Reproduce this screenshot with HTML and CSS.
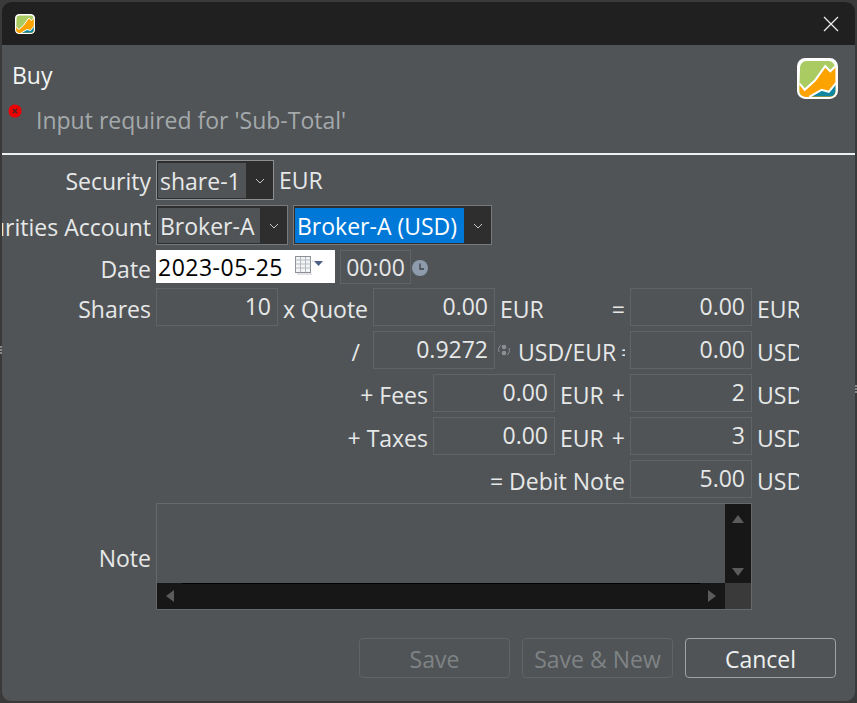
FILE: index.html
```html
<!DOCTYPE html>
<html lang="en">
<head>
<meta charset="utf-8">
<title>Buy</title>
<link rel="stylesheet" href="styles.css">
</head>
<body>
<svg class="defs" width="0" height="0" aria-hidden="true">
  <symbol id="logo" viewBox="0 0 40 40">
    <rect x="1" y="1" width="38" height="38" rx="7" fill="#fff"/>
    <path d="M3 9a6 6 0 0 1 6-6h22a6 6 0 0 1 6 6v16L2 37z" fill="#a9cb62"/>
    <path d="M2.500 25l5 6 10-9 10-14 5 5 5-5v30H8a5.500 5.500 0 0 1-5.500-5.500z" fill="#fda300"/>
    <path d="M12 37.500l12-6.500 7 2 6.500-8v7.500a5 5 0 0 1-5 5z" fill="#0f87a0"/>
    <path d="M2.500 25l5 6 10-9 10-14 5 5 6-6M12 38l12-7 7 2 7-8.500" fill="none" stroke="#fff" stroke-width="2"/>
    <rect x="1" y="1" width="38" height="38" rx="7" fill="none" stroke="#fff" stroke-width="2"/>
  </symbol>
</svg>
<span class="sash sash-left"></span>
<span class="sash sash-right"></span>
<div class="window">
  <header class="titlebar">
    <svg class="app-icon"><use href="#logo"/></svg>
    <svg class="close" viewBox="0 0 16 16"><path d="M1 1l14 14M15 1L1 15" stroke="#f0f0f0" stroke-width="1.200" fill="none"/></svg>
  </header>

  <section class="banner">
    <div class="banner-text">
      <h1 class="title">Buy</h1>
      <div class="message">
        <svg class="error" viewBox="0 0 16 16"><circle cx="8" cy="8" r="7.500" fill="#f00000"/><path d="M5.500 5.500l5 5M10.500 5.500l-5 5" stroke="#5a2020" stroke-width="1.800"/></svg>
        <span>Input required for 'Sub-Total'</span>
      </div>
    </div>
    <svg class="banner-logo"><use href="#logo"/></svg>
  </section>
  <hr class="rule">

  <main class="form">
    <div class="row row-security">
      <label class="lbl lbl-top w-main">Security</label>
      <div class="combo w-security">
        <span class="combo-text">share-1</span>
        <span class="combo-btn"><svg class="chev" viewBox="0 0 10 6"><path d="M1 1l4 4 4-4" fill="none" stroke="#c8c8c8"/></svg></span>
      </div>
      <span class="unit-free">EUR</span>
    </div>

    <div class="row row-account">
      <label class="lbl w-main">Securities Account</label>
      <div class="combo combo-dark w-broker">
        <span class="combo-text">Broker-A</span>
        <span class="combo-btn"><svg class="chev" viewBox="0 0 10 6"><path d="M1 1l4 4 4-4" fill="none" stroke="#c8c8c8"/></svg></span>
      </div>
      <div class="combo combo-dark w-broker-usd">
        <span class="combo-text selected">Broker-A (USD)</span>
        <span class="combo-btn"><svg class="chev" viewBox="0 0 10 6"><path d="M1 1l4 4 4-4" fill="none" stroke="#c8c8c8"/></svg></span>
      </div>
    </div>

    <div class="row row-date">
      <label class="lbl w-main">Date</label>
      <div class="date">
        <span class="date-text">2023-05-25</span>
        <svg class="cal" viewBox="0 0 30 19">
          <rect x="0.500" y="0.500" width="15" height="16" fill="#f4f4f4" stroke="#8b8f96"/>
          <path d="M0.500 4h15M0.500 8h15M0.500 12h15M5.500 1v15M10.500 1v15" stroke="#b4bac4" fill="none"/>
          <path d="M17 5h1.500M2 18h15" stroke="#c8c8c8" fill="none"/>
          <path d="M19 5h9l-4.500 5z" fill="#4d5f86"/>
        </svg>
      </div>
      <div class="time">00:00</div>
      <svg class="clock" viewBox="0 0 16 16"><circle cx="8" cy="8" r="8" fill="#8e9bad"/><path d="M8 3.500V9h4" stroke="#3c4148" stroke-width="1.300" fill="none"/></svg>
    </div>

    <div class="row">
      <label class="lbl w-main">Shares</label>
      <div class="input w-input">10</div>
      <label class="lbl w-quote">x Quote</label>
      <div class="input w-input">0.00</div>
      <span class="unit w-eur-gap">EUR</span>
      <label class="lbl w-op">=</label>
      <div class="input w-input">0.00</div>
      <span class="unit">EUR</span>
    </div>

    <div class="row">
      <label class="lbl w-slash">/</label>
      <div class="input w-input">0.9272</div>
      <svg class="sync" viewBox="0 0 14 14">
        <circle cx="7" cy="4" r="2.300" fill="#8c9094"/><circle cx="7" cy="10" r="2.300" fill="#8c9094"/>
        <path d="M2 9C1 6 2 3 4 2M12 5c1 3 0 6-2 7" fill="none" stroke="#8c9094"/>
      </svg>
      <span class="rate">USD/EUR</span>
      <label class="lbl w-clip">=</label>
      <div class="input w-input">0.00</div>
      <span class="unit">USD</span>
    </div>

    <div class="row">
      <label class="lbl w-fees">+ Fees</label>
      <div class="input w-input">0.00</div>
      <span class="unit w-eur-plus">EUR</span>
      <label class="lbl w-op">+</label>
      <div class="input w-input">2</div>
      <span class="unit">USD</span>
    </div>

    <div class="row">
      <label class="lbl w-fees">+ Taxes</label>
      <div class="input w-input">0.00</div>
      <span class="unit w-eur-plus">EUR</span>
      <label class="lbl w-op">+</label>
      <div class="input w-input">3</div>
      <span class="unit">USD</span>
    </div>

    <div class="row">
      <label class="lbl w-debit">= Debit Note</label>
      <div class="input w-input">5.00</div>
      <span class="unit">USD</span>
    </div>

    <div class="row row-note">
      <label class="lbl lbl-top w-main">Note</label>
      <div class="note">
        <div class="note-body">
          <div class="note-text"></div>
          <div class="vbar">
            <svg class="arrow" viewBox="0 0 12 8"><path d="M6 0l6 8H0z" fill="#5b5b5b"/></svg>
            <svg class="arrow" viewBox="0 0 12 8"><path d="M0 0h12L6 8z" fill="#5b5b5b"/></svg>
          </div>
        </div>
        <div class="note-foot">
          <div class="hbar">
            <svg class="arrow-h" viewBox="0 0 8 12"><path d="M8 0v12L0 6z" fill="#5b5b5b"/></svg>
            <span class="hbar-track"></span>
            <svg class="arrow-h" viewBox="0 0 8 12"><path d="M0 0l8 6-8 6z" fill="#5b5b5b"/></svg>
          </div>
          <div class="corner"></div>
        </div>
      </div>
    </div>
  </main>

  <footer class="actions">
    <button class="btn" disabled>Save</button>
    <button class="btn" disabled>Save &amp; New</button>
    <button class="btn btn-active">Cancel</button>
  </footer>
</div>
</body>
</html>
```
FILE: styles.css
```css
* { box-sizing: border-box; }
html, body { margin: 0; height: 100%; }
body {
  background: #3a3a3a;
  padding: 2px;
  overflow: hidden;
  font-family: "Open Sans", "Noto Sans", sans-serif;
  font-size: 23px;
  color: #e6e8e8;
}
.defs { position: absolute; }
.sash {
  position: absolute;
  width: 2px;
  height: 8px;
  background: repeating-linear-gradient(#8a8a8a 0 2px, #3a3a3a 2px 3px);
}
.sash-left { left: 0; top: 346px; }
.sash-right { right: 0; top: 385px; }
.window {
  width: 853px;
  height: 699px;
  background: #505457;
  border-radius: 9px;
  overflow: hidden;
}
.titlebar {
  height: 43px;
  background: #202020;
  display: flex;
  align-items: center;
  justify-content: space-between;
  padding: 0 16px 0 13px;
}
.app-icon { width: 20px; height: 20px; }
.close { width: 16px; height: 16px; }
.banner {
  height: 108px;
  display: flex;
  justify-content: space-between;
  padding: 12px 17px 0 0;
}
.banner-text { flex: 1; }
.title {
  margin: 0 0 0 10px;
  font-size: 23px;
  font-weight: 400;
  line-height: 36px;
  color: #f2f4f4;
}
.message {
  display: flex;
  align-items: flex-start;
  margin: 10px 0 0 6px;
  color: #a4a9ab;
  line-height: 34px;
}
.error { width: 14px; height: 14px; margin: 1px 14px 0 0; }
.banner-logo { width: 41px; height: 41px; margin-top: 1px; }
.rule {
  margin: 0;
  border: 0;
  height: 2px;
  background: #f0f0f0;
}
.form {
  display: flex;
  flex-direction: column;
  margin-left: -2px;
  padding-top: 5px;
  gap: 5px;
}
.row {
  display: flex;
  height: 38px;
  gap: 5px;
  align-items: stretch;
}
.row-security { height: 40px; }
.row-account { height: 40px; }
.row-date { height: 33px; }
.row-note { height: 107px; }
.lbl {
  display: flex;
  align-items: center;
  justify-content: flex-end;
  white-space: nowrap;
  overflow: hidden;
  padding-top: 4px;
  flex: none;
}
.lbl-top { padding-top: 2px; }
.combo {
  display: flex;
  border: 1px solid #8d8f90;
  background: #2e2e2e;
  padding: 2px 0 1px 1px;
  flex: none;
}
.combo-dark { border-color: #777a7c; }
.w-security { width: 118px; }
.w-broker { width: 132px; }
.w-broker-usd { width: 199px; }
.combo-text {
  flex: 1;
  display: flex;
  align-items: center;
  padding-left: 2px;
  background: #505457;
  white-space: nowrap;
}
.selected { background: #0078d7; color: #fff; }
.combo-btn {
  width: 27px;
  flex: none;
  display: flex;
  align-items: center;
  justify-content: center;
}
.chev { width: 10px; height: 6px; }
.unit-free {
  display: flex;
  align-items: center;
}
.date {
  width: 179px;
  flex: none;
  background: #fff;
  color: #000;
  display: flex;
  align-items: center;
  justify-content: space-between;
  padding: 0 10px 0 2px;
}
.date-text { letter-spacing: 0.5px; }
.cal { width: 30px; height: 19px; margin-top: -3px; }
.time {
  width: 71px;
  height: 34px;
  border: 1px solid #606467;
  display: flex;
  align-items: center;
  justify-content: center;
}
.clock { width: 16px; height: 16px; align-self: center; margin: 2px 0 0 -4px; }
.input {
  border: 1px solid #606467;
  display: flex;
  align-items: center;
  justify-content: flex-end;
  padding: 0 6px 3px 0;
  flex: none;
}
.unit {
  display: flex;
  align-items: center;
  width: 42px;
  overflow: hidden;
  white-space: nowrap;
  padding-top: 4px;
  flex: none;
}
.w-main { width: 151px; }
.w-quote { width: 85px; }
.w-slash { width: 368px; padding-right: 8px; }
.w-fees { width: 428px; }
.w-debit { width: 625px; }
.w-op { width: 14px; }
.w-clip { width: 4px; justify-content: flex-start; }
.w-input { width: 122px; }
.w-eur-gap { width: 106px; }
.w-eur-plus { width: 46px; }
.sync { width: 14px; height: 14px; align-self: center; margin-left: -3px; flex: none; }
.rate {
  display: flex;
  align-items: center;
  padding-top: 4px;
  white-space: nowrap;
  width: 98px;
  margin-left: 2px;
  flex: none;
}
.note {
  width: 596px;
  border: 1px solid #66696b;
  display: flex;
  flex-direction: column;
  flex: none;
}
.note-body { flex: 1; display: flex; min-height: 0; }
.note-text { flex: 1; }
.vbar {
  width: 26px;
  background: #171717;
  display: flex;
  flex-direction: column;
  justify-content: space-between;
  align-items: center;
  padding: 11px 0 7px;
}
.arrow { width: 12px; height: 8px; }
.note-foot { height: 26px; display: flex; }
.hbar {
  flex: 1;
  background: #171717;
  display: flex;
  align-items: center;
  justify-content: space-between;
  padding: 0 9px;
  gap: 8px;
}
.hbar-track {
  flex: 1;
  align-self: flex-start;
  height: 1px;
  background: #000;
}
.arrow-h { width: 8px; height: 12px; }
.corner { width: 26px; background: #3a3a3a; }
.actions {
  display: flex;
  justify-content: flex-end;
  gap: 12px;
  padding: 28px 19px 0 0;
}
.btn {
  width: 151px;
  height: 40px;
  border: 1px solid #606467;
  border-radius: 4px;
  background: #505457;
  color: #7f8385;
  font: inherit;
  padding: 1px 0 0;
}
.btn-active {
  border-color: #a0a2a3;
  color: #eef0f0;
}
```
